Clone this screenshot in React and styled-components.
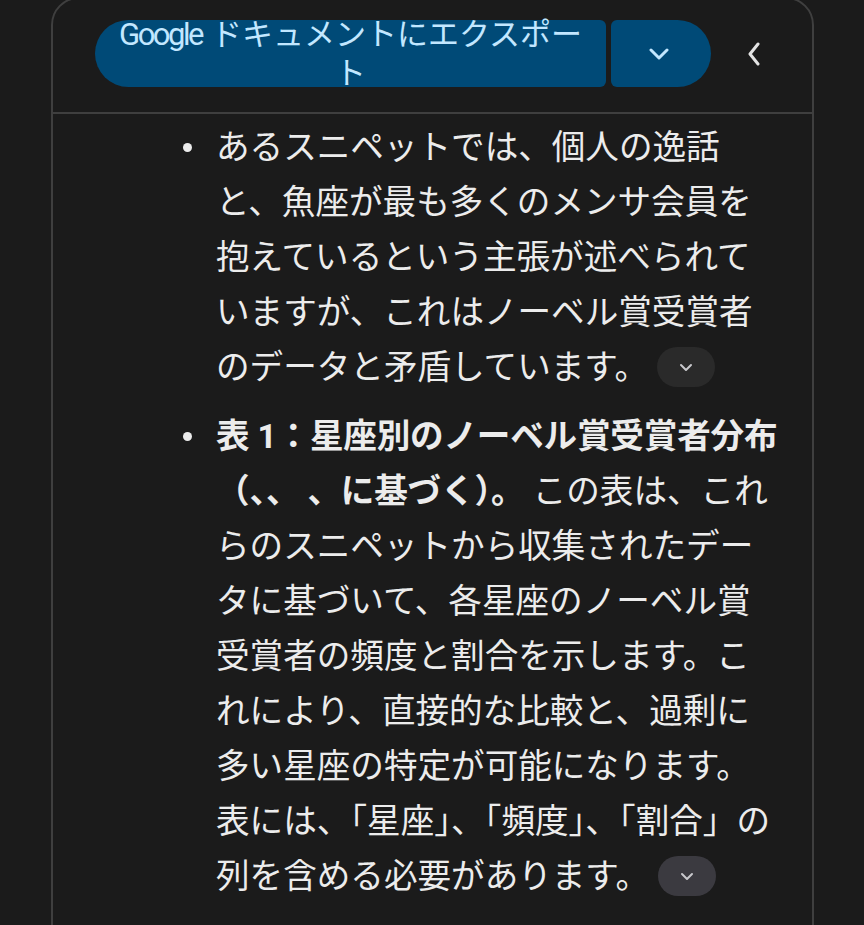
import styled, { createGlobalStyle } from 'styled-components'

const GlobalStyle = createGlobalStyle`
  html, body {
    margin: 0;
    padding: 0;
    background-color: #1b1b1b;
    overflow: hidden;
  }
  body {
    font-family: Roboto, "Noto Sans CJK JP", sans-serif;
  }
`

const Page = styled.div`
  width: 864px;
  height: 925px;
  overflow: hidden;
  background-color: #1b1b1b;
`

const Card = styled.div`
  box-sizing: border-box;
  margin: -3px 0 0 51px;
  width: 763px;
  min-height: 940px;
  border: 2px solid #3f3f3f;
  border-radius: 28px 28px 0 0;
  background-color: #1b1b1b;
`

const Header = styled.div`
  display: flex;
  align-items: center;
  height: 115px;
  padding: 0 0 4px 42px;
  box-sizing: border-box;
  border-bottom: 2px solid #3f3f3f;
`

const SplitButton = styled.div`
  display: flex;
  gap: 5px;
`

const ExportButton = styled.button`
  box-sizing: border-box;
  width: 511px;
  height: 67px;
  padding: 0 14px;
  border: none;
  border-radius: 34px 6px 6px 34px;
  background-color: #004a77;
  color: #c2e7ff;
  font-family: Roboto, "Noto Sans CJK JP", sans-serif;
  font-size: 31px;
  line-height: 39px;
  text-align: center;
  display: flex;
  align-items: center;
  justify-content: center;
  overflow: visible;
`

const Latin = styled.span`
  letter-spacing: -2.5px;
  margin-right: 9px;
`

const MenuButton = styled.button`
  width: 100px;
  height: 67px;
  border: none;
  border-radius: 6px 34px 34px 6px;
  background-color: #004a77;
  display: flex;
  align-items: center;
  justify-content: center;
  padding: 0 4px 0 0;
`

const BackButton = styled.button`
  margin-left: 30px;
  width: 26px;
  height: 40px;
  border: none;
  background: transparent;
  display: flex;
  align-items: center;
  justify-content: center;
  padding: 0;
`

const List = styled.div`
  display: flex;
  flex-direction: column;
  gap: 14px;
  padding: 6px 0 0 128px;
`

const Item = styled.div`
  display: flex;
  align-items: flex-start;
`

const Bullet = styled.span`
  flex: none;
  width: 9px;
  height: 9px;
  border-radius: 50%;
  background-color: #ececec;
  margin: 23px 24px 0 2px;
`

const Text = styled.p`
  margin: 0;
  width: 566px;
  color: #ececec;
  font-family: Roboto, "Noto Sans CJK JP", sans-serif;
  font-size: 33.6px;
  line-height: 55px;
  line-break: strict;
`

const Strong = styled.strong`
  font-weight: 700;
  letter-spacing: -0.2px;
`

const MoreChip = styled.span`
  display: inline-flex;
  align-items: center;
  justify-content: center;
  vertical-align: middle;
  width: 58px;
  height: 40px;
  margin-left: 9px;
  margin-top: -6px;
  border-radius: 20px;
  background-color: ${(p) => (p.active ? '#3b3a40' : '#2a2a2a')};
`

function ChevronDown({ size = 20, color, stroke = 3 }) {
  return (
    <svg width={size} height={size / 2 + 2} viewBox="0 0 20 12" fill="none">
      <path d="M2 2 L10 10 L18 2" stroke={color} strokeWidth={stroke} strokeLinecap="round" strokeLinejoin="round" />
    </svg>
  )
}

function ChevronLeft() {
  return (
    <svg width="14" height="24" viewBox="0 0 14 24" fill="none">
      <path d="M11 2 L3 12 L11 22" stroke="#e3e3e3" strokeWidth="3" strokeLinecap="round" strokeLinejoin="round" />
    </svg>
  )
}

function More({ active }) {
  return (
    <MoreChip active={active}>
      <svg width="14" height="9" viewBox="0 0 14 9" fill="none">
        <path d="M2 2 L7 7 L12 2" stroke="#c8c8cc" strokeWidth="2" strokeLinecap="round" strokeLinejoin="round" />
      </svg>
    </MoreChip>
  )
}

export default function App() {
  return (
    <Page>
      <GlobalStyle />
      <Card>
        <Header>
          <SplitButton>
            <ExportButton>
              <span>
                <Latin>Google</Latin>ドキュメントにエクスポー<br />ト
              </span>
            </ExportButton>
            <MenuButton>
              <ChevronDown color="#c2e7ff" />
            </MenuButton>
          </SplitButton>
          <BackButton>
            <ChevronLeft />
          </BackButton>
        </Header>
        <List>
          <Item>
            <Bullet />
            <Text>
              あるスニペットでは、個人の逸話と、魚座が最も多くのメンサ会員を抱えているという主張が述べられていますが、これはノーベル賞受賞者のデータと矛盾しています。
              <More />
            </Text>
          </Item>
          <Item>
            <Bullet />
            <Text>
              <Strong>表 1：星座別のノーベル賞受賞者分布（、、 、に基づく）。</Strong> この表は、これらのスニペットから収集されたデータに基づいて、各星座のノーベル賞受賞者の頻度と割合を示します。これにより、直接的な比較と、過剰に多い星座の特定が可能になります。表には、「星座」、「頻度」、「割合」の列を含める必要があります。
              <More active />
            </Text>
          </Item>
        </List>
      </Card>
    </Page>
  )
}
